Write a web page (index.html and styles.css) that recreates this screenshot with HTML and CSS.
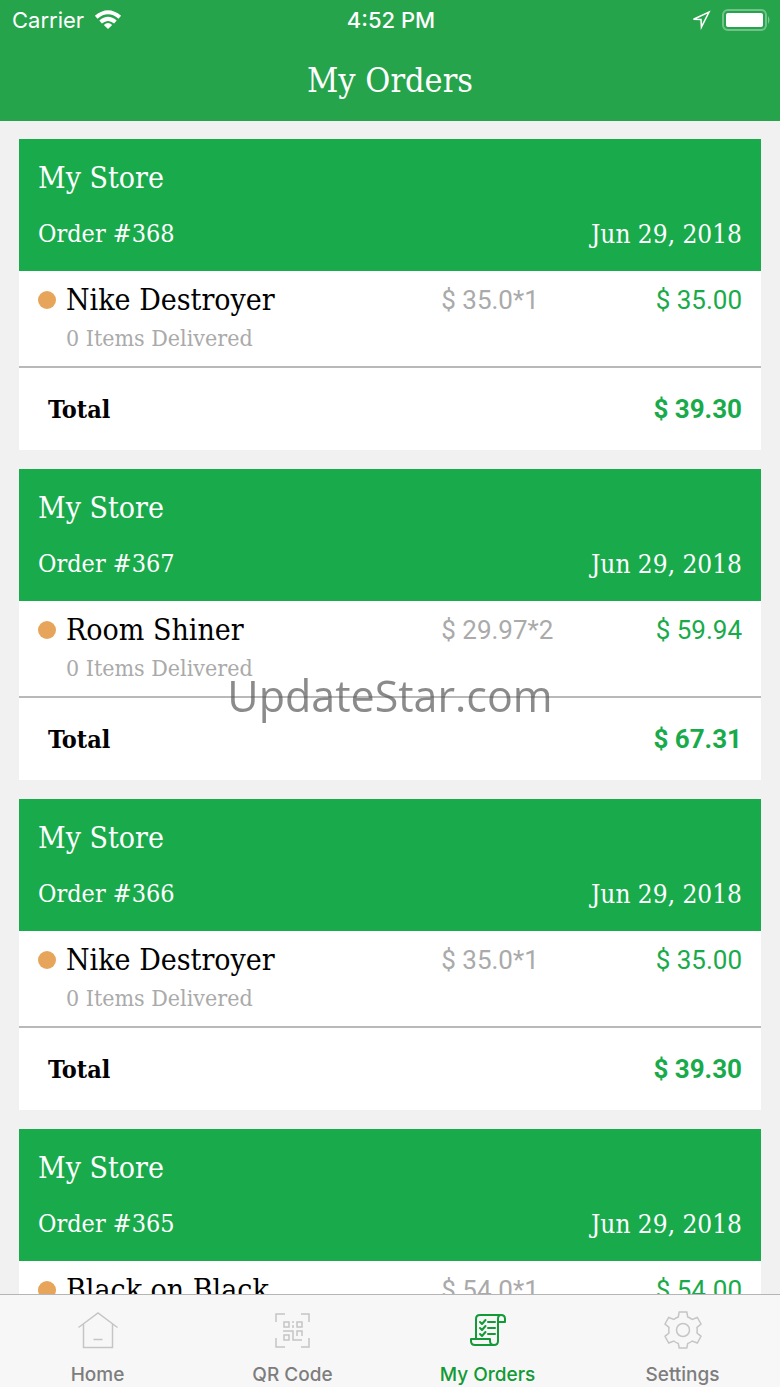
FILE: index.html
```html
<!DOCTYPE html>
<html lang="en">
<head>
<meta charset="utf-8">
<meta name="viewport" content="width=device-width, initial-scale=1">
<title>My Orders</title>
<link rel="stylesheet" href="styles.css">
</head>
<body>
<header class="top">
  <div class="status">
    <div class="carrier"><span>Carrier</span>
      <svg width="28" height="20" viewBox="0 0 28 20" fill="none" stroke="#fff" stroke-width="4"><path d="M2.2 7.3Q14-2.7 25.8 7.3"/><path d="M6.6 12Q14 5.6 21.4 12"/><path d="M14 19 9.8 15Q14 11 18.2 15Z" fill="#fff" stroke="none"/></svg>
    </div>
    <time class="clock">4:52 PM</time>
    <div class="indicators">
      <svg width="20" height="20" viewBox="0 0 20 20" fill="none" stroke="#fff" stroke-width="1.5" stroke-linejoin="miter"><path d="M2.5 9.3 18 2 10.4 17.2 10 9.5Z"/></svg>
      <svg width="49" height="22" viewBox="0 0 49 22"><rect x="2" y="1" width="43" height="20" rx="5" fill="none" stroke="#fff" stroke-opacity=".35" stroke-width="2"/><rect x="5" y="4" width="37" height="14" rx="2" fill="#fff"/><path d="M47 7Q50 11 47 15Z" fill="#fff" fill-opacity=".4"/></svg>
    </div>
  </div>
  <h1 class="title">My Orders</h1>
</header>
<main class="orders">
  <article class="card">
    <header class="card-head"><h2 class="store">My Store</h2><div class="meta"><span>Order #368</span><time class="date">Jun 29, 2018</time></div></header>
    <div class="item"><span class="dot"></span><h3 class="name">Nike Destroyer</h3><span class="rate">$ 35.0*1</span><span class="price">$ 35.00</span><p class="delivered">0 Items Delivered</p></div>
    <div class="total"><span>Total</span><span class="sum">$ 39.30</span></div>
  </article>
  <article class="card">
    <header class="card-head"><h2 class="store">My Store</h2><div class="meta"><span>Order #367</span><time class="date">Jun 29, 2018</time></div></header>
    <div class="item"><span class="dot"></span><h3 class="name">Room Shiner</h3><span class="rate">$ 29.97*2</span><span class="price">$ 59.94</span><p class="delivered">0 Items Delivered</p></div>
    <div class="total"><span>Total</span><span class="sum">$ 67.31</span></div>
  </article>
  <article class="card">
    <header class="card-head"><h2 class="store">My Store</h2><div class="meta"><span>Order #366</span><time class="date">Jun 29, 2018</time></div></header>
    <div class="item"><span class="dot"></span><h3 class="name">Nike Destroyer</h3><span class="rate">$ 35.0*1</span><span class="price">$ 35.00</span><p class="delivered">0 Items Delivered</p></div>
    <div class="total"><span>Total</span><span class="sum">$ 39.30</span></div>
  </article>
  <article class="card">
    <header class="card-head"><h2 class="store">My Store</h2><div class="meta"><span>Order #365</span><time class="date">Jun 29, 2018</time></div></header>
    <div class="item"><span class="dot"></span><h3 class="name">Black on Black</h3><span class="rate">$ 54.0*1</span><span class="price">$ 54.00</span></div>
  </article>
</main>
<nav class="tabs">
  <a class="tab" href="#home">
    <svg class="icon" viewBox="0 0 40 40"><path d="M0.5 17.5 20 3 39.5 17.5M5.500 14V37.5H34.5V14M15.5 29.5H24.5"/></svg>
    <span>Home</span></a>
  <a class="tab" href="#qr">
    <svg class="icon" viewBox="0 0 40 40"><path d="M3 12V4H12M28 4H36V12M36 28V37H28M12 37H3V28M11 12H16V17H11ZM24 12H29V17H24ZM11 25H16V30H11ZM20 11V13M20 15V18M10 21H20V30H29M24 26V21H29V26"/></svg>
    <span>QR Code</span></a>
  <a class="tab active" href="#orders" aria-current="page">
    <svg class="icon" viewBox="0 0 40 40"><path d="M8 29V9Q8 5 12 5H33Q37 5 37 9V12H30V31Q30 35 26 35H7Q3 35 3 31V29H22V31Q22 35 26 35M33 5Q30 5 30 9V12"/><path d="M12 12 14 14 17.5 10M12 18 14 20 17.5 16M12 24 14 26 17.5 22M20 12H27M20 18H27M20 24H27"/></svg>
    <span>My Orders</span></a>
  <a class="tab" href="#settings">
    <svg class="icon" viewBox="0 0 40 40"><path d="M16.2 2H23.8L24.7 7Q27 7.8 29.2 9.5L34.3 7.5 38 14 34 17.3Q34.5 20.2 34 23L38 26.3 34.3 33 29.2 31Q27 32.8 24.7 33.5L23.8 38H16.2L15.3 33.5Q13 32.8 10.8 31L5.7 33 2 26.3 6 23Q5.5 20.2 6 17.3L2 14 5.7 7.5 10.8 9.5Q13 7.8 15.3 7Z"/><circle cx="20" cy="20" r="6.5"/></svg>
    <span>Settings</span></a>
</nav>
<div class="watermark">UpdateStar.com</div>
</body>
</html>
```
FILE: styles.css
```css
* { box-sizing: border-box; margin: 0; }
body {
  display: flex;
  flex-direction: column;
  height: 100vh;
  overflow: hidden;
  background: #f1f1f1;
  color: #000;
  font-family: "Roboto Slab", "DejaVu Serif Condensed", "DejaVu Serif", serif;
}
.top { flex: none; background: #26a44b; color: #fff; }
.status {
  display: grid;
  grid-template-columns: 1fr auto 1fr;
  align-items: center;
  height: 40px;
  padding: 0 10px 0 12px;
  font: 22px Inter, sans-serif;
}
.carrier { display: flex; align-items: center; gap: 10px; }
.clock { font-weight: 500; }
.indicators { display: flex; align-items: center; justify-content: flex-end; gap: 10px; }
.title { height: 81px; font-size: 34px; font-weight: 400; line-height: 80px; text-align: center; }
.orders {
  flex: 1;
  min-height: 0;
  overflow-y: auto;
  scrollbar-width: none;
  padding: 18px 19px 0;
}
.card { margin-bottom: 19px; background: #fff; }
.card-head { padding: 19px 19px 21px; background: #19ab4b; color: #fff; }
.store { font-size: 30px; font-weight: 400; line-height: 40px; }
.meta { display: flex; justify-content: space-between; margin-top: 20px; font-size: 25px; line-height: 32px; }
.date { font-size: 26px; }
.item {
  display: grid;
  grid-template-columns: 28px 53.3% 1fr auto;
  align-items: center;
  padding: 9px 19px 12px;
  border-bottom: 2px solid #b9b9b9;
}
.dot { width: 18px; height: 18px; border-radius: 50%; background: #e6a55a; }
.name { font-size: 30px; font-weight: 400; line-height: 40px; white-space: nowrap; }
.rate, .price, .sum { font-family: "Roboto Slab", Roboto, sans-serif; font-size: 26px; }
.rate { color: #aaa; }
.price, .sum { color: #19ab4b; }
.delivered { grid-column: 2 / -1; padding-top: 2px; color: #aaa; font-size: 23px; line-height: 32px; }
.total {
  display: flex;
  align-items: center;
  justify-content: space-between;
  height: 82px;
  padding: 0 19px 0 29px;
  font-size: 25px;
  font-weight: 700;
}
.tabs {
  flex: none;
  display: grid;
  grid-template-columns: repeat(4, 1fr);
  height: 93px;
  border-top: 1px solid #b5b5b5;
  background: #f7f7f7;
  font: 500 19px Inter, sans-serif;
}
.tab {
  display: flex;
  flex-direction: column;
  align-items: center;
  gap: 13px;
  padding-top: 15px;
  color: #7d7d7d;
  text-decoration: none;
}
.icon { width: 40px; height: 40px; fill: none; stroke: #c5c5c5; stroke-width: 1.5; }
.active { color: #119a35; }
.active .icon { stroke: #119a35; stroke-width: 2; stroke-linecap: round; stroke-linejoin: round; }
.watermark {
  position: fixed;
  top: 50%;
  left: 50%;
  transform: translate(-50%, -50%);
  padding-top: 4px;
  color: rgba(90, 90, 90, .7);
  font: 43px/60px "Open Sans", sans-serif;
  pointer-events: none;
}
```
